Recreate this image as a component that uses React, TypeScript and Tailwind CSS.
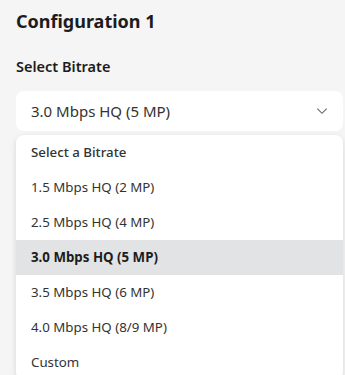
const options = [
  '1.5 Mbps HQ (2 MP)',
  '2.5 Mbps HQ (4 MP)',
  '3.0 Mbps HQ (5 MP)',
  '3.5 Mbps HQ (6 MP)',
  '4.0 Mbps HQ (8/9 MP)',
  'Custom',
];

export default function App() {
  const selected = '3.0 Mbps HQ (5 MP)';

  return (
    <div
      className="min-h-[375px] w-[345px] overflow-hidden bg-[#f5f5f5] pl-4 pr-[2px] pt-[9px] text-[#1c1c1c]"
      style={{ fontFamily: '"Noto Sans", "Open Sans", sans-serif' }}
    >
      <h2 className="text-[18px] font-bold leading-[24px]">Configuration 1</h2>
      <p className="mt-[23px] text-[14.5px] font-semibold leading-[20px]">Select Bitrate</p>

      <div className="mt-[15px] flex h-[40px] items-center justify-between rounded-lg bg-white pl-[15px] pr-[14px]">
        <span className="text-[15px] text-[#333]">{selected}</span>
        <svg width="14" height="14" viewBox="0 0 24 24" fill="none" stroke="#666" strokeWidth="1.8">
          <path d="M4 8l8 8 8-8" />
        </svg>
      </div>

      <ul className="mt-[4px] overflow-hidden rounded-lg bg-white shadow-[0_2px_6px_rgba(0,0,0,0.12)]">
        <li className="flex h-[35px] items-center px-[15px] text-[13.3px] font-medium text-[#333]">
          Select a Bitrate
        </li>
        {options.map((o) => (
          <li
            key={o}
            className={`flex h-[35px] items-center px-[15px] text-[13.3px] ${
              o === selected ? 'bg-[#e2e3e5] font-bold text-[#1c1c1c]' : 'text-[#333]'
            }`}
          >
            {o}
          </li>
        ))}
      </ul>
    </div>
  );
}
